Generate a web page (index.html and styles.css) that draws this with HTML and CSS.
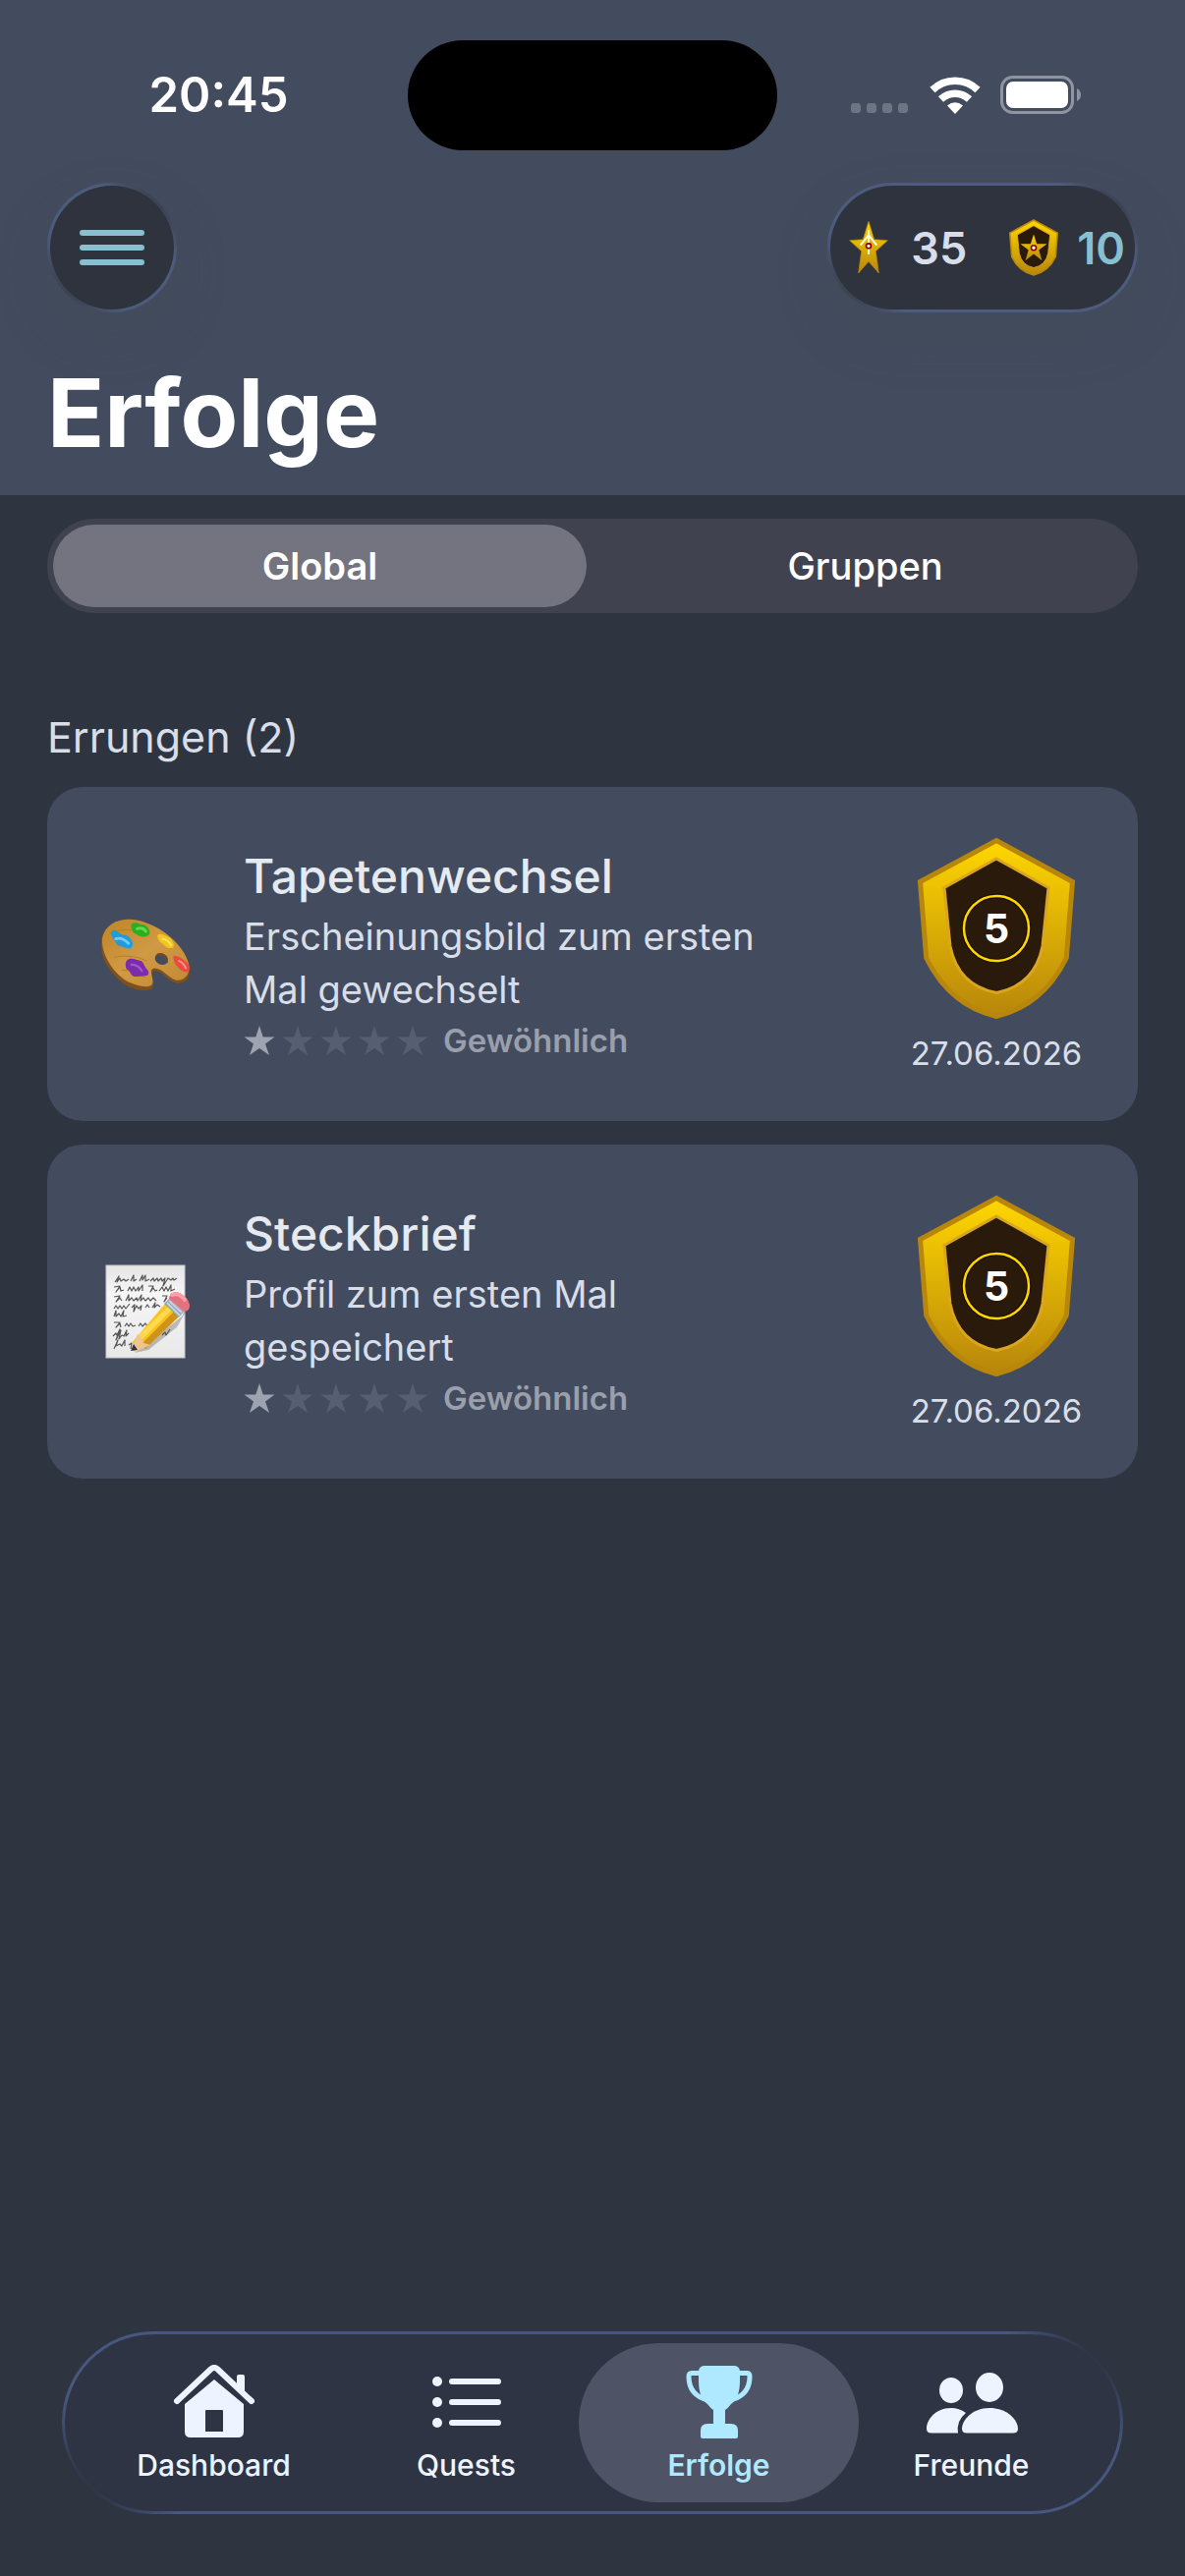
FILE: index.html
```html
<!DOCTYPE html>
<html lang="de">
<head>
    <meta charset="UTF-8">
    <meta name="viewport" content="width=device-width, initial-scale=1.0">
    <title>Erfolge</title>
    <link rel="stylesheet" href="styles.css">
</head>
<body>
    <!-- Gemeinsame Symbole -->
    <svg class="defs" width="0" height="0" aria-hidden="true">
        <defs>
            <linearGradient id="gold" x1="0" y1="0" x2="0" y2="1">
                <stop offset="0" stop-color="#ffd700"/>
                <stop offset="1" stop-color="#b8860b"/>
            </linearGradient>
            <linearGradient id="wood" x1="0" y1="0" x2="1" y2="1">
                <stop offset="0" stop-color="#c08326"/>
                <stop offset="0.5" stop-color="#d09a45"/>
                <stop offset="1" stop-color="#c08a35"/>
            </linearGradient>
            <linearGradient id="paper" x1="0" y1="0" x2="0" y2="1">
                <stop offset="0" stop-color="#e4e4e4"/>
                <stop offset="0.3" stop-color="#f6f6f6"/>
                <stop offset="1" stop-color="#e8e8e8"/>
            </linearGradient>
            <symbol id="shield" viewBox="0 0 180 192">
                <path d="M90 6.500 L167.500 48.500 L161.300 126 Q138 174 90 185.500 Q42 174 18.700 126 L12.500 48.500 Z" fill="url(#gold)" stroke="#b8860b" stroke-width="5"/>
                <path d="M90 25 L143 54.500 L137 114 Q129 154 90 161.500 Q51 154 43 114 L37 54.500 Z" fill="#2a1a0c" stroke="#daa520" stroke-width="3"/>
            </symbol>
            <symbol id="star" viewBox="0 0 32 30">
                <path d="M16 0 L19.700 11.500 L31.500 11.500 L22 18.500 L26 30 L16 23 L6 30 L10 18.500 L0.500 11.500 L12.300 11.500 Z"/>
            </symbol>
        </defs>
    </svg>

    <header class="header">
        <div class="status-bar">
            <div class="status-time">20:45</div>
            <div class="island"></div>
            <div class="status-icons">
                <svg width="60" height="40" viewBox="0 0 60 40" fill="#6d7482">
                    <rect x="0" y="28" width="10" height="10" rx="3"/>
                    <rect x="16" y="28" width="10" height="10" rx="3"/>
                    <rect x="32" y="28" width="10" height="10" rx="3"/>
                    <rect x="48" y="28" width="10" height="10" rx="3"/>
                </svg>
                <svg width="52" height="40" viewBox="0 0 52 40" fill="none" stroke="#fff">
                    <path d="M3 14.500 A33 33 0 0 1 49 14.500" stroke-width="7.500"/>
                    <path d="M11.500 24 A21 21 0 0 1 40.500 24" stroke-width="7.500"/>
                    <path d="M18 30.500 Q26 24 34 30.500 L26 39 Z" fill="#fff" stroke="none"/>
                </svg>
                <svg width="84" height="40" viewBox="0 0 84 40">
                    <rect x="1.500" y="1.500" width="72" height="36" rx="11" fill="none" stroke="#8e94a0" stroke-width="3"/>
                    <rect x="6" y="6" width="63" height="27" rx="7" fill="#fff"/>
                    <path d="M78 13 Q82 15 82 19.500 Q82 24 78 26 Z" fill="#8e94a0"/>
                </svg>
            </div>
        </div>

        <div class="toolbar">
            <button class="glass menu-btn" type="button" aria-label="Menü">
                <svg width="66" height="36" viewBox="0 0 66 36" fill="#88c0d0">
                    <rect x="0" y="0" width="66" height="6" rx="3"/>
                    <rect x="0" y="15" width="66" height="6" rx="3"/>
                    <rect x="0" y="30" width="66" height="6" rx="3"/>
                </svg>
            </button>
            <div class="glass points">
                <svg width="42" height="56" viewBox="130 161 124 168">
                    <path d="M192 165 L209 220 L250 223 L214 256 L223 323 L192 288 L161 323 L170 256 L134 223 L175 220 Z" fill="url(#gold)" stroke="#b8860b" stroke-width="2"/>
                    <path d="M192 192 V266 M167 238 L192 207 L217 238" fill="none" stroke="#fff8dc" stroke-width="6"/>
                    <circle cx="192" cy="240" r="7.500" fill="#fff" stroke="#8b0000" stroke-width="5"/>
                </svg>
                <span class="points-value">35</span>
                <svg class="points-shield" width="52" height="60" viewBox="7 1 166 190">
                    <use href="#shield" width="180" height="192"/>
                    <path d="M90 53 L100 84 L133 84 L107 104 L117 138 L90 117 L63 138 L73 104 L47 84 L80 84 Z" fill="url(#gold)"/>
                    <circle cx="90" cy="97" r="8" fill="#fff" stroke="#8b0000" stroke-width="5"/>
                </svg>
                <span class="points-value accent">10</span>
            </div>
        </div>

        <h1>Erfolge</h1>
    </header>

    <main class="content">
        <div class="segmented">
            <button class="segment active" type="button">Global</button>
            <button class="segment" type="button">Gruppen</button>
        </div>

        <h2 class="section-title">Errungen (2)</h2>

        <div class="card-list">
            <article class="card">
                <div class="card-icon">
                    <svg width="92" height="73" viewBox="2 2 93 78" preserveAspectRatio="none">
                        <path d="M3 26 C5 10 18 3 34 3 C58 5 88 28 94 53 C96 68 88 74 79 72 C71 69 66 59 58 59 C51 60 60 72 55 78 C50 82 41 80 31 76 C15 66 1 47 3 26 Z" fill="#7f4f1c"/>
                        <path d="M4 24 C7 8 20 2 35 3 C58 5 87 27 93 51 C95 64 88 70 80 69 C71 66 66 56 58 56 C50 57 59 69 55 74 C50 78 40 75 31 71 C17 63 3 43 4 24 Z" fill="url(#wood)"/>
                        <path d="M12 18 Q30 9 52 20 M16 44 Q34 40 50 48 M24 58 Q36 58 48 66" fill="none" stroke="#b97c28" stroke-width="1"/>
                        <ellipse cx="65" cy="46" rx="7" ry="6" transform="rotate(30 65 46)" fill="#434c5e"/>
                        <path d="M59 42 Q63 37 69 42 Q73 47 71 51 Q70 44 65 42 Q61 41 59 42" fill="#774a18"/>
                        <path d="M14 15 C19 13 22 20 28 20 C33 22 37 28 35 32 C33 37 27 33 22 32 C18 31 18 26 15 24 Q12 18 14 15" fill="#249bd8"/>
                        <path d="M18 24 Q25 22 31 29" fill="none" stroke="#74caef" stroke-width="3" stroke-linecap="round"/>
                        <path d="M34 8 C38 4 43 9 48 9 C53 13 55 19 50 21 C44 24 38 18 36 17 Q33 12 34 8" fill="#2aae22"/>
                        <path d="M40 13 Q46 11 49 16" fill="none" stroke="#61db4c" stroke-width="3" stroke-linecap="round"/>
                        <path d="M61 20 C65 17 69 21 74 23 C79 29 79 35 74 34 C70 35 67 29 64 28 Q60 23 61 20" fill="#f4c51d"/>
                        <path d="M66 24 Q72 25 75 31" fill="none" stroke="#ffe467" stroke-width="2" stroke-linecap="round"/>
                        <path d="M77 43 C81 41 88 46 93 52 C95 57 93 61 90 60 C84 60 80 52 78 49 Z" fill="#ec4a40"/>
                        <path d="M83 48 Q88 50 90 56" fill="none" stroke="#ff958a" stroke-width="2" stroke-linecap="round"/>
                        <path d="M29 48 C33 43 39 47 44 48 C48 51 47 55 51 58 Q53 62 50 64 C45 65 41 65 37 65 C32 63 34 59 29 57 Q27 52 29 48" fill="#7c2ca8"/>
                        <path d="M34 52 Q41 52 45 59" fill="none" stroke="#a45ccd" stroke-width="2" stroke-linecap="round"/>
                    </svg>
                </div>
                <div class="card-body">
                    <h3>Tapetenwechsel</h3>
                    <p class="description">Erscheinungsbild zum ersten Mal gewechselt</p>
                    <div class="rarity">
                        <svg class="rarity-star filled" aria-hidden="true"><use href="#star"/></svg>
                        <svg class="rarity-star" aria-hidden="true"><use href="#star"/></svg>
                        <svg class="rarity-star" aria-hidden="true"><use href="#star"/></svg>
                        <svg class="rarity-star" aria-hidden="true"><use href="#star"/></svg>
                        <svg class="rarity-star" aria-hidden="true"><use href="#star"/></svg>
                        <span>Gewöhnlich</span>
                    </div>
                </div>
                <div class="reward">
                    <svg width="180" height="192" viewBox="0 0 180 192">
                        <use href="#shield" width="180" height="192"/>
                        <circle cx="90" cy="96" r="33" fill="none" stroke="#1c1006" stroke-width="5"/>
                        <circle cx="90" cy="96" r="33" fill="none" stroke="#ffd700" stroke-width="2.500"/>
                        <text class="reward-value" x="90" y="111" text-anchor="middle">5</text>
                    </svg>
                    <time datetime="2026-06-27">27.06.2026</time>
                </div>
            </article>

            <article class="card">
                <div class="card-icon">
                    <svg width="96" height="96" viewBox="0 0 96 96">
                        <rect x="8" y="1" width="80" height="94" fill="url(#paper)" stroke="#c9cbd0" stroke-width="1"/>
                        <g fill="none" stroke="#555" stroke-width="1.200" stroke-linejoin="round">
                            <path d="M17 18 l4 -6 l-2 6 l3 -4 l1 3 l3 -2 l2 2 l3 -2 M33 17 l3 -6 l0 6 l3 -2 M42 17 l3 -6 l0 5 l3 -5 l0 6 l4 -2 M53 17 l3 -3 l1 3 l3 -3 l1 3 l3 -3 l1 3 l3 -3 l-2 8 l5 -8 l3 2 l2 -2 l1 2 l3 -2"/>
                            <path d="M16 23 l6 -1 l-4 6 l4 -5 l1 4 l3 -1 M30 27 l2 -4 l2 4 l2 -4 l2 4 l3 -4 l0 4 l4 -6 l0 6 M51 22 l5 0 l-3 6 l3 -4 l2 3 l2 -1 M62 27 l3 -4 l2 4 l2 -4 l2 4 l3 -6 l0 6 l4 -2"/>
                            <path d="M16 33 l6 -1 l-4 6 l4 -4 l2 3 M28 37 l3 -6 l0 6 l3 -3 l2 3 l3 -3 l1 3 l4 -6 l-1 6 l3 -3 l2 3 l3 -3 l2 3 l3 -3 l3 3 M65 32 l5 0 l-3 6 l3 -4"/>
                            <path d="M16 45 l2 -3 l2 3 l2 -3 l2 3 l2 -3 l2 3 l4 -5 M34 44 l3 -3 l-1 7 l3 -6 l2 3 l3 -3 l-1 5 M48 44 l2 -3 l2 3 M55 44 l3 -5 l-1 5 l3 -3 l3 2"/>
                            <path d="M16 53 l2 -6 l0 6 l3 -3 l2 3 l3 -6 l-1 6 l4 -1"/>
                            <path d="M16 59 l6 0 l-4 5 l4 -4 l1 4 M27 63 l2 -3 l2 3 l2 -3 l2 3 l3 -1 M41 63 l2 -3 l2 3 l3 -3 l2 3"/>
                            <path d="M15 73 l3 -3 l1 2 l3 -6 l-4 11 l5 -10 l-2 9 l3 -4 l2 1 l3 -6 l-1 6 l3 -3 M65 72 l3 -3 l1 3 l4 -6 M16 86 l4 -9 l-2 6 l4 -2 l2 2 l3 -6 l0 6 M31 82 l3 -2 l-1 6"/>
                        </g>
                        <path d="M37 90 L85 53 L88 46 L92 43 L80 64 L51 87 Z" fill="#555" opacity="0.35"/>
                        <path d="M34 80 L68 40 L82 53 L48 86 Z" fill="#f9c51d"/>
                        <path d="M43 82 L77 48 L82 53 L48 86 Z" fill="#cf931d"/>
                        <path d="M38 75 L71 43 L75 46 L42 79 Z" fill="#ffd94f"/>
                        <path d="M40 71 L34 86 L37 89 L53 82 L46 80 L44 74 Z" fill="#edc58e"/>
                        <path d="M36 81 L33 88 L40 87 Z" fill="#34343a"/>
                        <path d="M67 40 L72 35 L87 48 L82 54 Z" fill="#8fa2bb"/>
                        <path d="M70 39 L83 52 M72 37 L85 49" stroke="#cad4df" stroke-width="2"/>
                        <path d="M72 35 C72 28 80 26 86 31 C93 36 95 43 91 47 L87 48 Z" fill="#e3727f"/>
                        <path d="M75 31 Q82 28 88 36" fill="none" stroke="#ff9ea5" stroke-width="4" stroke-linecap="round"/>
                    </svg>
                </div>
                <div class="card-body">
                    <h3>Steckbrief</h3>
                    <p class="description">Profil zum ersten Mal gespeichert</p>
                    <div class="rarity">
                        <svg class="rarity-star filled" aria-hidden="true"><use href="#star"/></svg>
                        <svg class="rarity-star" aria-hidden="true"><use href="#star"/></svg>
                        <svg class="rarity-star" aria-hidden="true"><use href="#star"/></svg>
                        <svg class="rarity-star" aria-hidden="true"><use href="#star"/></svg>
                        <svg class="rarity-star" aria-hidden="true"><use href="#star"/></svg>
                        <span>Gewöhnlich</span>
                    </div>
                </div>
                <div class="reward">
                    <svg width="180" height="192" viewBox="0 0 180 192">
                        <use href="#shield" width="180" height="192"/>
                        <circle cx="90" cy="96" r="33" fill="none" stroke="#1c1006" stroke-width="5"/>
                        <circle cx="90" cy="96" r="33" fill="none" stroke="#ffd700" stroke-width="2.500"/>
                        <text class="reward-value" x="90" y="111" text-anchor="middle">5</text>
                    </svg>
                    <time datetime="2026-06-27">27.06.2026</time>
                </div>
            </article>
        </div>
    </main>

    <nav class="tab-bar">
        <a class="tab" href="#dashboard">
            <svg width="84" height="76" viewBox="0 0 84 76">
                <path d="M4 37 L38.500 4.500 Q42 1.500 45.500 4.500 L80 37" fill="none" stroke="#eef4ff" stroke-width="6" stroke-linecap="round"/>
                <path d="M65 26 V12 Q65 10 67 10 H71 Q73 10 73 12 V31 Z" fill="#eef4ff"/>
                <path fill-rule="evenodd" d="M42 15 L72 40 V68 Q72 74 66 74 H18 Q12 74 12 68 V40 Z M34 46 Q33 46 33 47 V68 H51 V47 Q51 46 50 46 Z" fill="#eef4ff"/>
            </svg>
            <span>Dashboard</span>
        </a>
        <a class="tab" href="#quests">
            <svg width="84" height="76" viewBox="0 0 84 76" fill="#eef4ff">
                <circle cx="12" cy="17" r="5"/>
                <circle cx="12" cy="38" r="5"/>
                <circle cx="12" cy="59" r="5"/>
                <rect x="24" y="14" width="53" height="6" rx="3"/>
                <rect x="24" y="35" width="53" height="6" rx="3"/>
                <rect x="24" y="56" width="53" height="6" rx="3"/>
            </svg>
            <span>Quests</span>
        </a>
        <a class="tab active" href="#erfolge" aria-current="page">
            <svg width="84" height="76" viewBox="0 0 84 76">
                <path d="M24 8.500 H14 Q11 8.500 11 12 C11 25 18 33 31 36 M60 8.500 H70 Q73 8.500 73 12 C73 25 66 33 53 36" fill="none" stroke="#aee9ff" stroke-width="5"/>
                <path d="M27 1 H57 Q62 1 63 6 V16 C63 28 60 36 54 40 Q51 44 48 46 V60 H54 Q61 60 61 67 V73 Q61 75 59 75 H25 Q23 75 23 73 V67 Q23 60 30 60 H36 V46 Q33 44 30 40 C24 36 21 28 21 16 V6 Q22 1 27 1 Z" fill="#aee9ff"/>
            </svg>
            <span>Erfolge</span>
        </a>
        <a class="tab" href="#freunde">
            <svg width="96" height="76" viewBox="0 0 96 76" fill="#eef4ff">
                <ellipse cx="27" cy="26" rx="12" ry="13"/>
                <ellipse cx="66" cy="23" rx="14" ry="15"/>
                <path d="M27 44 C10 44 2 57 2 65 Q2 69.500 7 69.500 H34 Q32 57 42 49 Q35 44 27 44 Z"/>
                <path d="M66 44 C48 44 38 57 38 65 Q38 69.500 43 69.500 H90 Q95 69.500 95 65 C95 57 85 44 66 44 Z"/>
            </svg>
            <span>Freunde</span>
        </a>
    </nav>
</body>
</html>
```

FILE: styles.css
```css
* {
    margin: 0;
    padding: 0;
    box-sizing: border-box;
}

body {
    font-family: Inter, 'Liberation Sans', sans-serif;
    background: #2e3440;
    color: #d8dee9;
    min-height: 100vh;
    display: flex;
    flex-direction: column;
}

svg {
    display: block;
    flex-shrink: 0;
}

.defs {
    position: absolute;
}

button {
    font-family: inherit;
    border: none;
    cursor: pointer;
}

/* Kopfbereich */
.header {
    background: #434c5e;
    padding: 41px 48px 24px;
}

.status-bar {
    display: grid;
    grid-template-columns: 1fr 376px 1fr;
    align-items: center;
}

.status-time {
    color: #fff;
    font-size: 49px;
    font-weight: 600;
    line-height: 60px;
    text-align: center;
    padding-right: 18px;
}

.island {
    height: 112px;
    border-radius: 56px;
    background: #000;
}

.status-icons {
    display: flex;
    align-items: center;
    justify-content: flex-end;
    gap: 20px;
    padding-right: 56px;
}

.toolbar {
    display: flex;
    justify-content: space-between;
    margin-top: 33px;
}

/* Rand, der oben rechts und unten links ausläuft */
.glass,
.tab-bar {
    border: 3px solid transparent;
    background:
        linear-gradient(var(--fill), var(--fill)) padding-box,
        radial-gradient(circle var(--spread) at top right, var(--fade) 30%, transparent) border-box,
        radial-gradient(circle var(--spread) at bottom left, var(--fade) 30%, transparent) border-box,
        linear-gradient(var(--edge), var(--edge)) border-box;
}

.glass {
    --fill: #2f333d;
    --edge: #4d5c7e;
    --fade: #3a414f;
    --spread: 80px;
    box-shadow: 0 24px 48px rgba(67, 76, 88, 0.4);
}

.menu-btn {
    width: 132px;
    height: 132px;
    border-radius: 66px;
    display: flex;
    align-items: center;
    justify-content: center;
}

.points {
    height: 132px;
    border-radius: 66px;
    padding: 0 10px 0 18px;
    display: flex;
    align-items: center;
}

.points-value {
    font-size: 45px;
    font-weight: 600;
    margin-left: 22px;
}

.points-shield {
    margin-left: 42px;
}

.points-value.accent {
    color: #88c0d0;
    margin-left: 18px;
}

.header h1 {
    color: #fff;
    font-size: 96px;
    font-weight: 700;
    line-height: 120px;
    margin-top: 42px;
}

/* Inhalt */
.content {
    padding: 24px 48px;
}

.segmented {
    display: grid;
    grid-template-columns: 1fr 1fr;
    gap: 12px;
    padding: 6px;
    border-radius: 48px;
    background: #40434f;
}

.segment {
    height: 84px;
    border-radius: 42px;
    background: none;
    color: #fff;
    font-size: 38px;
    font-weight: 500;
}

.segment.active {
    background: #737480;
    font-weight: 600;
}

.section-title {
    font-size: 43px;
    font-weight: 400;
    line-height: 52px;
    margin-top: 100px;
}

.card-list {
    display: flex;
    flex-direction: column;
    gap: 24px;
    margin-top: 25px;
}

.card {
    display: flex;
    align-items: center;
    padding: 48px;
    border-radius: 36px;
    background: #434c5e;
}

.card-icon {
    width: 104px;
    display: flex;
    justify-content: center;
    flex-shrink: 0;
}

.card-body {
    flex: 1;
    margin: 0 48px;
}

.card-body h3 {
    color: #e5e9f0;
    font-size: 48px;
    font-weight: 500;
    line-height: 60px;
}

.description {
    max-width: 560px;
    font-size: 38px;
    line-height: 54px;
    margin: 4px 0;
}

.rarity {
    display: flex;
    align-items: center;
    gap: 7px;
    color: #9a9fac;
    font-size: 33px;
    font-weight: 600;
    line-height: 42px;
}

.rarity span {
    margin-left: 8px;
}

.rarity-star {
    width: 32px;
    height: 30px;
    fill: #565e6f;
}

.rarity-star.filled {
    fill: #9ea3b0;
}

.reward {
    width: 192px;
    display: flex;
    flex-direction: column;
    align-items: center;
    gap: 10px;
}

.reward-value {
    fill: #fff;
    font-size: 41px;
    font-weight: 700;
}

.reward time {
    font-size: 33px;
    line-height: 42px;
}

/* Tab-Leiste */
.tab-bar {
    --fill: #2e3444;
    --edge: #475880;
    --fade: #2e3444;
    --spread: 120px;
    display: grid;
    grid-template-columns: repeat(4, 1fr);
    margin: auto 63px 63px;
    padding: 9px 23px;
    border-radius: 93px;
}

.tab {
    height: 162px;
    margin: 0 -14px;
    padding-top: 22px;
    border-radius: 81px;
    display: flex;
    flex-direction: column;
    align-items: center;
    gap: 7px;
    color: #eef4ff;
    font-size: 30px;
    font-weight: 500;
    line-height: 38px;
    text-decoration: none;
}

.tab.active {
    background: #4e5365;
    color: #aee9ff;
    font-weight: 600;
}
```
